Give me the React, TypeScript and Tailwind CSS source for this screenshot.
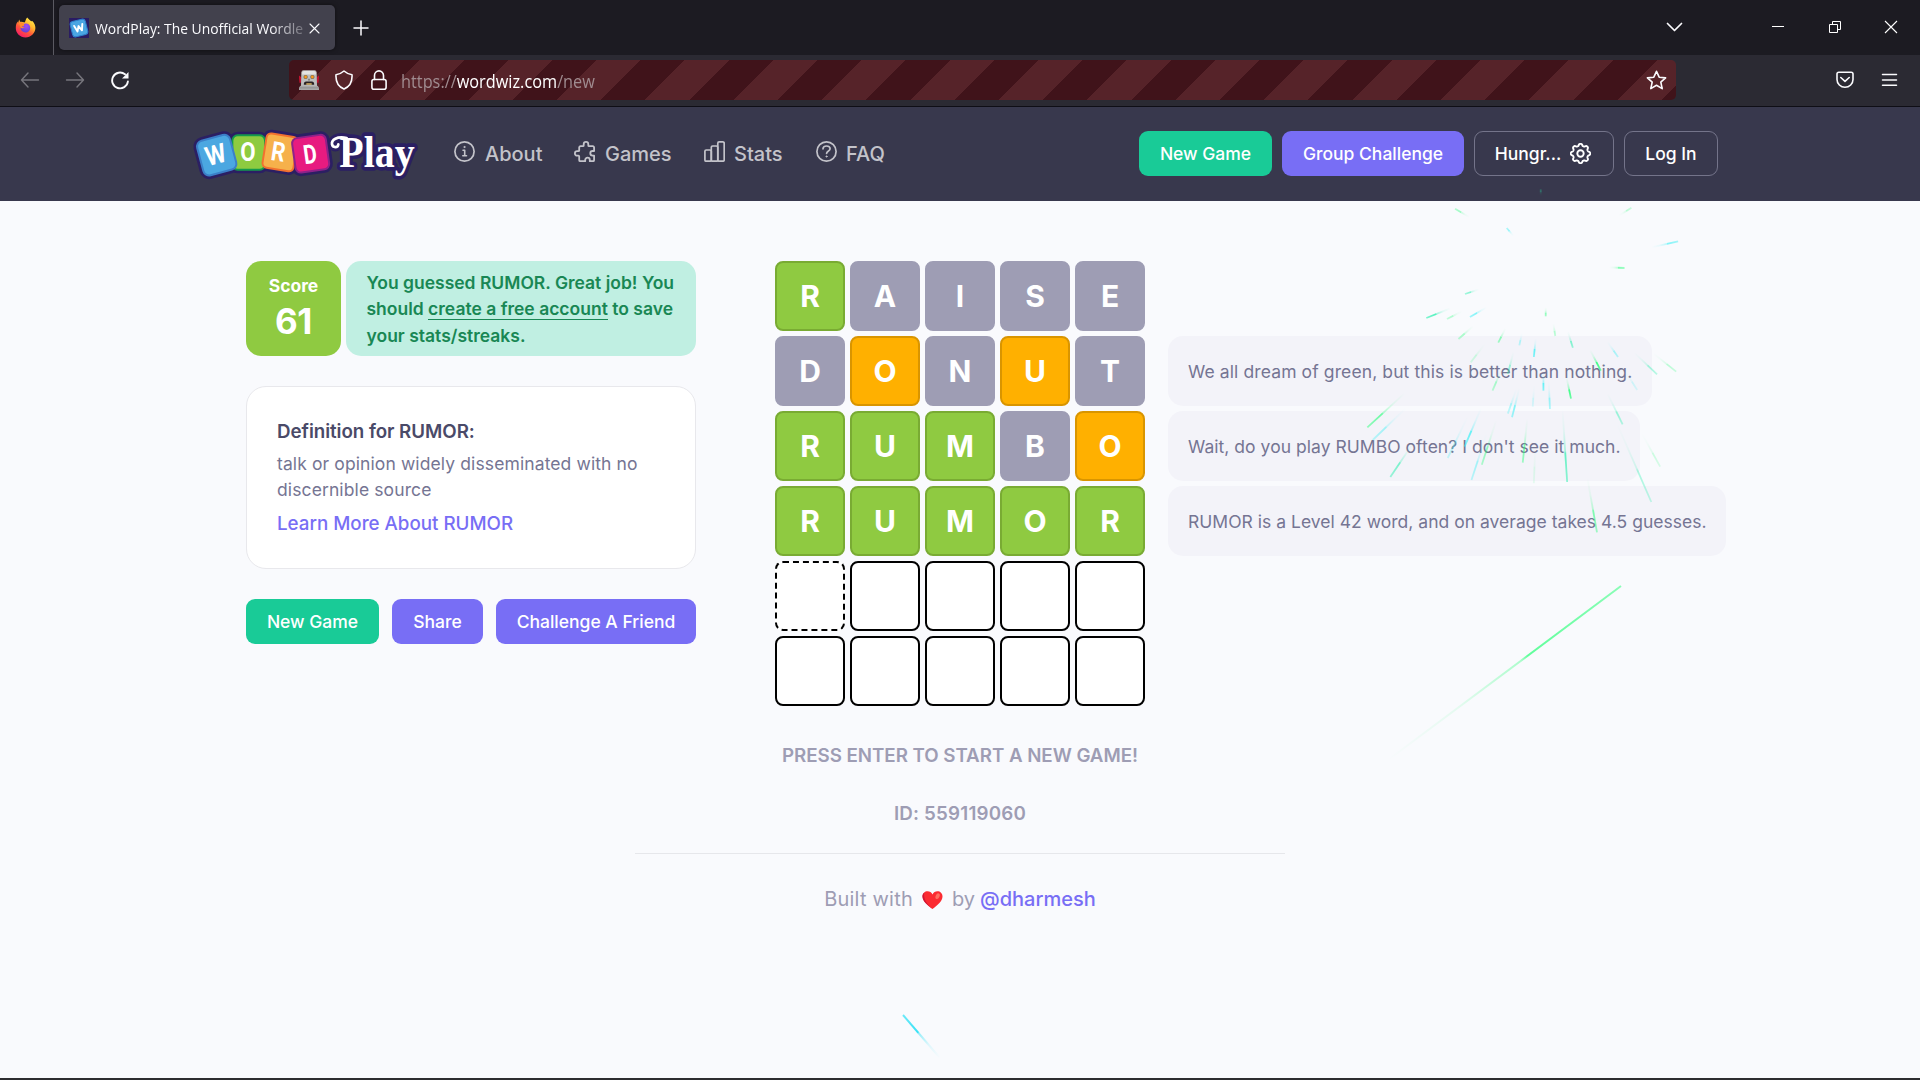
import React from 'react';

function FirefoxIcon() {
  return (
    <svg className="h-[21px] w-[21px]" viewBox="0 0 21 21">
      <defs>
        <linearGradient id="ffBody" x1="0.85" y1="0.05" x2="0.25" y2="1">
          <stop offset="0" stopColor="#fff14a" />
          <stop offset="0.35" stopColor="#ffb52e" />
          <stop offset="0.62" stopColor="#ff5a38" />
          <stop offset="1" stopColor="#f5156c" />
        </linearGradient>
        <radialGradient id="ffCore" cx="0.6" cy="0.3" r="0.8">
          <stop offset="0" stopColor="#a04cf5" />
          <stop offset="1" stopColor="#5a3fd0" />
        </radialGradient>
      </defs>
      <path
        d="M12.2 0.4c1.2 1.5 2.6 2.6 3.9 3.8l1.2-.2c2 2 3.2 4.4 3.1 7.1-.2 5.300-4.500 9.400-9.900 9.400S.8 16.300.8 11.100c0-3.100.7-5.200 2-6.500l.2 1.500 1.200-3.500.9 2.200c1.600-.2 3.200 0 4.500.8 1-1.500.9-3.500 2.600-5.200z"
        fill="url(#ffBody)"
      />
      <path
        d="M9.200 6.900c2.600-1.400 5.800.4 6 3.500.2 3-2.100 5-4.700 5-2.700 0-4.900-1.900-4.900-4.600 0-.8.2-1.500.6-2 .9.8 2.200.5 3-.1-.6-.3-.8-1.100 0-1.800z"
        fill="url(#ffCore)"
      />
      <path d="M4.300 6.200c1.600-.9 3.700-.6 4.900.7 0 .9-1.300 1.700-2.400 2 .4.9 1.400 1.500 2.900 1.100-1 1.400-2.700 1.600-4.200.800z" fill="#ff8a2e" />
    </svg>
  );
}

function Favicon() {
  return (
    <svg className="h-5 w-5 shrink-0" viewBox="0 0 20 20">
      <rect width="20" height="20" fill="#2a1c62" />
      <g transform="rotate(-14 10 10)">
        <rect x="2.200" y="2.200" width="15.600" height="15.600" rx="3" fill="#4aa5e2" stroke="#2f7fc9" strokeWidth="1" />
        <path d="M5.800 6.800l1.900 6.200L10 8l2.300 5 1.900-6.200" fill="none" stroke="#fff" strokeWidth="1.900" strokeLinejoin="round" strokeLinecap="round" />
      </g>
    </svg>
  );
}

function RobotIcon() {
  return (
    <svg className="h-5 w-5" viewBox="0 0 20 20">
      <path d="M0 5.500l2 1.500v5.500l-1.400.5C.2 11 0 8 0 5.500zM20 5.500l-2 1.500v5.500l1.400.5c.4-2 .6-5 .6-7.500z" fill="#c4122f" />
      <path d="M2.300 2.500Q2.500.3 4.500.2h11q2 .1 2.200 2.300l.3 13.500H2z" fill="#bdbdbd" />
      <path d="M3.200 2.500Q3.500 1 5 1h10q1.500 0 1.800 1.500l.1 2H3.100z" fill="#e3e3e3" />
      <circle cx="6.600" cy="7" r="2.100" fill="#75634c" />
      <circle cx="13.400" cy="7" r="2.100" fill="#75634c" />
      <circle cx="6.600" cy="7" r="1.400" fill="#f79a1f" />
      <circle cx="13.400" cy="7" r="1.400" fill="#f79a1f" />
      <path d="M9.300 8.800h1.400l.4 1.700H8.900z" fill="#7c7c7c" />
      <path d="M4.800 14.700q0-3.200 2.400-3.200h5.600q2.400 0 2.400 3.200z" fill="#2a2224" />
      <path d="M7.300 13.300h5.400v1.400H7.300z" fill="#e9c06a" />
      <path d="M1.500 15.700h17l1.500 1.800V20H0v-2.500z" fill="#a9a9a9" />
      <path d="M0 17.500h20v.8H0z" fill="#858585" />
    </svg>
  );
}

const line = { fill: 'none', stroke: 'currentColor', strokeLinecap: 'round', strokeLinejoin: 'round' } as const;

function InfoIcon() {
  return (
    <svg className="h-[21px] w-[21px]" viewBox="0 0 21 21" {...line} strokeWidth="1.700">
      <circle cx="10.500" cy="10.500" r="9.600" />
      <path d="M9 9.300h1.700v5.200M8.800 14.700h3.700" strokeWidth="1.600" />
      <circle cx="10.400" cy="6" r="0.600" fill="currentColor" strokeWidth="0.900" />
    </svg>
  );
}

function PuzzleIcon() {
  return (
    <svg className="h-[21px] w-[21px]" viewBox="0 0 21 21" {...line} strokeWidth="1.800">
      <path d="M6.500 5.200H9c.5 0 .7-.4.7-.8V3.200a2.300 2.300 0 0 1 4.600 0v1.200c0 .5.200.8.700.8h3.800a1.300 1.300 0 0 1 1.300 1.300V10h-1.500a2.300 2.300 0 0 0 0 4.600h1.500v4.300a1.300 1.300 0 0 1-1.300 1.300h-3v-1.300a2.300 2.300 0 0 0-4.600 0v1.300H6.500a1.300 1.300 0 0 1-1.300-1.300v-3.500c0-.5-.4-.7-.8-.7H3.200a2.300 2.300 0 0 1 0-4.600h1.200c.5 0 .8-.2.800-.7V6.500a1.300 1.300 0 0 1 1.300-1.300z" />
    </svg>
  );
}

function StatsIcon() {
  return (
    <svg className="h-[21px] w-[21px]" viewBox="0 0 21 21" {...line} strokeWidth="1.700">
      <rect x="0.900" y="9" width="6.400" height="11.200" rx="1.300" />
      <rect x="7.300" y="5" width="6.500" height="15.200" rx="1.300" />
      <rect x="13.800" y="0.900" width="6.400" height="19.300" rx="1.300" />
    </svg>
  );
}

function HelpIcon() {
  return (
    <svg className="h-[21px] w-[21px]" viewBox="0 0 21 21" {...line} strokeWidth="1.700">
      <circle cx="10.500" cy="10.500" r="9.600" />
      <path d="M7 7.800C7 5.800 8.600 5 10.500 5s3.600 1 3.600 2.800c0 2.300-3.300 2.100-3.500 4.600" />
      <circle cx="10.500" cy="15.500" r="0.600" fill="currentColor" strokeWidth="0.900" />
    </svg>
  );
}

const gearPath =
  Array.from({ length: 145 }, (_, i) => {
    const a = (i / 144) * Math.PI * 2;
    const r = 8.7 + 1.05 * Math.tanh(1.6 * Math.cos(8 * a));
    return `${i ? 'L' : 'M'}${(10.5 + r * Math.sin(a)).toFixed(2)} ${(10.5 - r * Math.cos(a)).toFixed(2)}`;
  }).join('') + 'Z';

function GearIcon() {
  return (
    <svg className="h-[21px] w-[21px]" viewBox="0 0 21 21" {...line} strokeWidth="1.900">
      <path d={gearPath} />
      <circle cx="10.500" cy="10.500" r="3.200" />
    </svg>
  );
}

function LogoTiles({ outline }: { outline?: boolean }) {
  const o = outline ? { stroke: '#2b1f63', fill: '#2b1f63', strokeWidth: 22 } : null;
  return (
    <g strokeLinejoin="round">
      <rect x="157" y="79" width="98" height="103" rx="16" fill="#8ecb40" stroke="#149a4c" strokeWidth="6" {...o} />
      <rect x="253" y="78" width="94" height="104" rx="14" transform="rotate(9 300 130)" fill="#f6b14b" stroke="#f1702f" strokeWidth="6" {...o} />
      <rect x="59" y="85" width="102" height="107" rx="18" transform="rotate(-15 110 138)" fill="#4ba7e1" stroke="#3b7fc8" strokeWidth="6" {...o} />
      <rect x="341" y="82" width="102" height="104" rx="16" transform="rotate(-8 392 134)" fill="#e71b80" stroke="#8d2289" strokeWidth="6" {...o} />
    </g>
  );
}

const swash = 'M500 87C470 81 454 93 456 106c2 11 18 11 19 0';

function Logo() {
  const letters: [string, number, number, number, number][] = [
    ['W', 107, 137, -15, 62],
    ['O', 204, 129, 0, 46],
    ['R', 295, 128, 9, 42],
    ['D', 390, 135, -8, 40],
  ];
  return (
    <svg className="h-[90px] w-[260px]" viewBox="0 0 780 270">
      <LogoTiles outline />
      <g stroke="#2b1f63" strokeLinejoin="round" strokeLinecap="round">
        <path d={swash} fill="none" strokeWidth="26" />
        <text x="478" y="173" fill="#fff" strokeWidth="22" style={{ paintOrder: 'stroke' }} fontFamily="'Liberation Serif', serif" fontWeight="700" fontSize="132" textLength="226" lengthAdjust="spacingAndGlyphs">
          Play
        </text>
      </g>
      <path d={swash} fill="none" stroke="#fff" strokeWidth="8" strokeLinecap="round" />
      <path d="M494 84v86" stroke="#fff" strokeWidth="8" />
      <LogoTiles />
      {letters.map(([ch, x, y, r, w]) => (
        <text
          key={ch}
          x={x - w / 2}
          y={y + 28}
          transform={`rotate(${r} ${x} ${y})`}
          fontFamily="Roboto, sans-serif"
          fontWeight="700"
          fontSize="80"
          fill="#fff"
          textLength={w}
          lengthAdjust="spacingAndGlyphs"
        >
          {ch}
        </text>
      ))}
    </svg>
  );
}

function HeartIcon() {
  return (
    <svg className="h-[18px] w-[21px]" viewBox="0 0 21 18">
      <path d="M10.500 18C6 14.500.5 10.500.5 5.500.5 2.300 2.900.3 5.500.3c2.200 0 4 1.200 5 3.100 1-1.900 2.800-3.100 5-3.100 2.600 0 5 2 5 5.200 0 5-5.500 9-10 12.500z" fill="#fb2b31" />
      <path d="M10.500 18C6 14.500.5 10.500.5 5.500c0-1.800.7-3.200 1.800-4.100C1.200 7 4 12 10.500 18z" fill="#cf1535" />
      <ellipse cx="15.600" cy="5.200" rx="1.900" ry="3" transform="rotate(25 15.600 5.200)" fill="#ff6f60" />
    </svg>
  );
}

function BrowserChrome() {
  return (
    <div className="text-[#fbfbfe]">
      <div className="flex h-[55px] bg-[#1c1b22]">
        <div className="flex w-[54px] items-center justify-center border-r border-[#5b5a62]">
          <div className="mr-[3px] flex">
            <FirefoxIcon />
          </div>
        </div>
        <div className="mt-[5px] ml-[5px] flex h-[45px] w-[276px] items-center rounded-[5px] bg-[#42414d] pl-[10px] shadow-[0_0_4px_rgba(0,0,0,0.5)]">
          <Favicon />
          <div className="ml-[6px] w-[213px] overflow-hidden [mask-image:linear-gradient(to_right,#000_82%,transparent_103%)]">
            <span className="inline-block origin-left scale-x-[0.925] text-[15px] leading-6 whitespace-nowrap" style={{ fontFamily: '"Open Sans", sans-serif' }}>
              WordPlay: The Unofficial Wordle
            </span>
          </div>
          <svg className="mt-px ml-[1px] h-[11px] w-[11px] shrink-0" viewBox="0 0 11 11" {...line} strokeWidth="1.100">
            <path d="M1 1l9 9M10 1l-9 9" />
          </svg>
        </div>
        <svg className="mt-5 ml-[18px] h-4 w-4" viewBox="0 0 16 16" {...line} strokeWidth="1.500">
          <path d="M8 1v14M1 8h14" />
        </svg>
        <svg className="mt-[22px] ml-auto h-[10px] w-[17px]" viewBox="0 0 17 10" {...line} strokeWidth="1.700">
          <path d="M1.500 1.500l7 7 7-7" />
        </svg>
        <svg className="mt-[20px] ml-[88px] h-[14px] w-[14px]" viewBox="0 0 14 14" fill="none" stroke="#fff">
          <path d="M1 6.500h12" />
        </svg>
        <svg className="mt-[20px] ml-[43px] h-[14px] w-[14px]" viewBox="0 0 14 14" fill="none" stroke="#fff">
          <path d="M1.500 4.500h8v8h-8zM4.500 4.500v-3h8v8h-3" />
        </svg>
        <svg className="mt-5 mr-[22px] ml-[42px] h-[14px] w-[14px]" viewBox="0 0 14 14" fill="none" stroke="#fff" strokeWidth="1.100">
          <path d="M1 1l12 12M13 1L1 13" />
        </svg>
      </div>

      <div className="flex h-[52px] items-start border-b border-[#0f0e16] bg-[#2b2a33]">
        <svg className="mt-[17px] ml-5 h-4 w-5 text-[#77767d]" viewBox="0 0 20 16" {...line} strokeWidth="1.400">
          <path d="M18.500 8h-17M8 1L1.500 8 8 15" />
        </svg>
        <svg className="mt-[17px] ml-[25px] h-4 w-5 text-[#77767d]" viewBox="0 0 20 16" {...line} strokeWidth="1.400">
          <path d="M1.500 8h17M12 1l6.500 7L12 15" />
        </svg>
        <svg className="mt-4 ml-[25px] h-[19px] w-5" viewBox="0 0 20 19" {...line} strokeWidth="1.900">
          <path d="M17.900 10.500A7.900 7.900 0 1 1 15 3.300" />
          <path d="M18.500 1v6.500H12z" fill="currentColor" stroke="none" />
        </svg>
        <div className="mt-[5px] ml-[159px] flex h-10 w-[1387px] items-center rounded-[5px] [background:repeating-linear-gradient(135deg,#40131a_0,#40131a_30px,#562329_30px,#562329_61.250px,#40131a_61.250px,#40131a_62.500px)]">
          <div className="ml-[10px]">
            <RobotIcon />
          </div>
          <svg className="ml-[15px] h-5 w-5" viewBox="0 0 20 20" {...line} strokeWidth="1.600">
            <path d="M10 1c2.500 2.200 5 3.300 8 3.800.4 6.200-1.600 11.700-8 14.300C3.600 16.500 1.600 11 2 4.800 5 4.300 7.500 3.200 10 1z" />
          </svg>
          <svg className="ml-[17px] h-5 w-4" viewBox="0 0 16 20" {...line} strokeWidth="1.600">
            <rect x="0.900" y="9.500" width="14.200" height="9.700" rx="2" />
            <path d="M3.500 9.500V5.400a4.500 4.500 0 0 1 9 0v4.100" />
          </svg>
          <div className="ml-[14px] w-[240px] pt-[2px]">
            <span className="inline-block origin-left scale-x-[0.932] text-[17.500px] leading-6 whitespace-nowrap text-[#a08c90]" style={{ fontFamily: '"Open Sans", sans-serif' }}>
              https://<span className="text-white">wordwiz.com</span>/new
            </span>
          </div>
          <svg className="mr-[9px] ml-auto h-[21px] w-[21px]" viewBox="0 0 21 21" {...line} strokeWidth="1.600">
            <path d="M10.500 1.300l2.700 5.900 6.400.7-4.800 4.300 1.400 6.400-5.700-3.300-5.700 3.300 1.400-6.400L1.400 7.900l6.400-.7z" />
          </svg>
        </div>
        <svg className="mt-[16px] ml-[160px] h-[18px] w-[18px]" viewBox="0 0 18 18" {...line} strokeWidth="1.600">
          <path d="M2.800 1.200h12.400a1.800 1.800 0 0 1 1.800 1.800v5.500a8 7.800 0 0 1-16 0V3a1.800 1.800 0 0 1 1.800-1.800z" />
          <path d="M4.800 6.500L9 10.300l4.200-3.800" />
        </svg>
        <svg className="mt-[18px] ml-[27px] h-[14px] w-[17px]" viewBox="0 0 17 14" {...line} strokeWidth="1.500">
          <path d="M1.500 1.500h14M1.500 7h14M1.500 12.200h14" />
        </svg>
      </div>
    </div>
  );
}

const button = 'flex h-[45px] shrink-0 items-center justify-center rounded-[9px] pt-px text-[17.5px] font-medium text-white whitespace-nowrap';

function SiteHeader() {
  return (
    <header className="flex h-[94px] items-center bg-[#38384d]">
      <div className="ml-[180px] shrink-0">
        <Logo />
      </div>
      <nav className="ml-[14px] flex text-[20px] font-medium text-[#c3c3ca]">
        <a className="flex w-[120px] items-center gap-[10px]">
          <span className="-mt-[5px]"><InfoIcon /></span>About
        </a>
        <a className="flex w-[130px] items-center gap-[10px]">
          <span className="-mt-[5px]"><PuzzleIcon /></span>Games
        </a>
        <a className="flex w-[112px] items-center gap-[9px]">
          <span className="-mt-[5px]"><StatsIcon /></span>Stats
        </a>
        <a className="flex items-center gap-[9px]">
          <span className="-mt-[5px]"><HelpIcon /></span>FAQ
        </a>
      </nav>
      <div className="mr-[202px] mb-px ml-auto flex gap-[10px]">
        <button className={`${button} w-[133px] bg-[#19cb97]`}>New Game</button>
        <button className={`${button} w-[182px] bg-[#786ef5]`}>Group Challenge</button>
        <button className={`${button} w-[140px] gap-[9px] border border-[#74748a] pr-[2px]`}>
          Hungr... <span className="-mt-px"><GearIcon /></span>
        </button>
        <button className={`${button} w-[94px] border border-[#74748a]`}>Log In</button>
      </div>
    </header>
  );
}

const rows: [string, string][] = [
  ['RAISE', 'gxxxx'],
  ['DONUT', 'xyxyx'],
  ['RUMBO', 'gggxy'],
  ['RUMOR', 'ggggg'],
  ['     ', 'deeee'],
  ['     ', 'eeeee'],
];

const tileStyle: Record<string, string> = {
  g: 'bg-[#8fca41] border-[#79ab33]',
  x: 'bg-[#9e9db4] border-[#9e9db4]',
  y: 'bg-[#ffb000] border-[#d99500]',
  d: 'bg-white border-black border-dashed',
  e: 'bg-white border-black',
};

function Board() {
  return (
    <div className="grid grid-cols-5 gap-[5px]">
      {rows.flatMap(([word, states], r) =>
        word.split('').map((ch, c) => (
          <div
            key={`${r}-${c}`}
            className={`flex h-[70px] w-[70px] items-center justify-center rounded-[8px] border-2 text-[30px] font-bold text-white ${tileStyle[states[c]]}`}
          >
            {ch.trim()}
          </div>
        )),
      )}
    </div>
  );
}

function Results() {
  return (
    <section className="w-[450px]">
      <div className="flex gap-[5px]">
        <div className="h-[95px] w-[95px] rounded-[15px] bg-[#8fca41] pt-[11px] text-center font-bold text-white">
          <div className="text-[17.5px] leading-[27px]">Score</div>
          <div className="text-[35px] leading-[44px] tracking-[-0.5px]">61</div>
        </div>
        <div className="flex h-[95px] w-[350px] items-center rounded-[15px] bg-[#c0efe2] pt-[2px] pl-[20.500px] text-[17.5px] leading-[26.250px] font-semibold whitespace-nowrap text-[#198754]">
          <p>
            You guessed RUMOR. Great job! You
            <br />
            should <span className="border-b border-[#198754]">create a free account</span> to save
            <br />
            your stats/streaks.
          </p>
        </div>
      </div>
      <div className="mt-[30px] h-[183px] rounded-[20px] border border-[#e8e8ec] bg-white pt-[31px] pl-[30px]">
        <h2 className="text-[18.750px] leading-7 font-semibold tracking-[-0.050px] text-[#4a4a68]">Definition for RUMOR:</h2>
        <p className="mt-[5px] text-[17.5px] leading-[26.250px] tracking-[0.110px] text-[#757593]">
          talk or opinion widely disseminated with no
          <br />
          discernible source
        </p>
        <a className="mt-[6px] block text-[18.750px] leading-7 font-[450] text-[#786ef5]">Learn More About RUMOR</a>
      </div>
      <div className="mt-[30px] flex gap-[13px]">
        <button className={`${button} w-[133px] bg-[#19cb97]`}>New Game</button>
        <button className={`${button} w-[91px] bg-[#786ef5]`}>Share</button>
        <button className={`${button} w-[200px] bg-[#786ef5]`}>Challenge A Friend</button>
      </div>
    </section>
  );
}

const bubble = 'flex h-[70px] items-center rounded-[15px] bg-[#f3f3f9] pt-[2px] pl-5 text-[17.5px] whitespace-nowrap text-[#757593]';

function Comments() {
  return (
    <section className="mt-[75px] flex flex-col items-start gap-[5px]">
      <div className={`${bubble} w-[484px] tracking-[0.110px]`}>We all dream of green, but this is better than nothing.</div>
      <div className={`${bubble} w-[472px] tracking-[0.040px]`}>Wait, do you play RUMBO often? I don't see it much.</div>
      <div className={`${bubble} w-[558px] tracking-[0.020px]`}>RUMOR is a Level 42 word, and on average takes 4.5 guesses.</div>
    </section>
  );
}

// Firework sparks: head x, head y, tail x, tail y, colour, opacity
const G = '#2bff7c';
const C = '#3df0f5';
const T = '#22f0ac';
const sparks: [number, number, number, number, string, number][] = [
  [797, 56, 835, 82, G, 0.5], [1258, 53, 1225, 77, G, 0.35], [932, 114, 950, 138, C, 0.6],
  [1380, 154, 1310, 172, C, 0.7], [1240, 234, 1200, 232, G, 0.65], [823, 312, 860, 298, T, 0.6],
  [722, 384, 785, 355, T, 0.85], [776, 387, 815, 364, G, 0.4], [836, 381, 880, 352, C, 0.7],
  [1034, 379, 1034, 352, G, 0.6], [1059, 438, 1054, 400, G, 0.4], [806, 447, 845, 408, G, 0.45],
  [910, 458, 929, 415, G, 0.6], [965, 466, 972, 430, C, 0.45], [1105, 473, 1092, 425, T, 0.65],
  [1003, 501, 1008, 445, C, 0.9], [1223, 501, 1195, 455, C, 0.5], [1325, 553, 1265, 488, T, 0.45],
  [1375, 545, 1315, 490, G, 0.35], [1178, 542, 1150, 480, G, 1], [838, 517, 875, 462, G, 0.25],
  [935, 552, 950, 485, T, 0.5], [895, 602, 920, 535, G, 0.45], [1028, 602, 1028, 545, C, 0.9],
  [1000, 650, 1004, 585, C, 0.25], [1045, 657, 1042, 575, C, 0.6], [1100, 626, 1088, 560, G, 1],
  [1273, 600, 1240, 540, C, 0.25], [1235, 703, 1195, 610, T, 0.5], [935, 671, 958, 595, C, 0.45],
  [946, 682, 965, 595, C, 0.7], [568, 712, 665, 610, G, 0.75], [582, 750, 668, 655, C, 0.5],
  [822, 770, 865, 655, C, 0.85], [778, 804, 830, 680, C, 0.4], [867, 824, 905, 690, G, 0.55],
  [974, 818, 986, 685, G, 0.65], [1090, 876, 1078, 660, T, 0.75], [628, 861, 690, 755, T, 0.65],
  [840, 870, 880, 730, C, 0.5], [1003, 880, 1007, 760, G, 0.15], [1310, 936, 1220, 700, T, 0.4],
  [1333, 830, 1285, 730, G, 0.25], [1168, 1027, 1143, 865, G, 0.65], [1021, -2, 1021, 18, T, 0.35],
];

function Fireworks() {
  const px = (x: number) => 1150 + x / 2.613;
  const py = (y: number) => 190 + y / 3;
  const segments = [
    ...sparks.map(([a, b, c, d, col, o]) => ({ x1: px(a), y1: py(b), x2: px(c), y2: py(d), col, o, w: 1.8 })),
    { x1: 1621, y1: 586, x2: 1388, y2: 760, col: '#3dff85', o: 0.9, w: 2 },
    { x1: 903, y1: 1015, x2: 940, y2: 1058, col: '#22dff5', o: 1, w: 2 },
  ];
  return (
    <svg className="pointer-events-none absolute inset-0 h-full w-full" viewBox="0 0 1920 1080">
      {segments.map((s, i) => (
        <g key={i}>
          <linearGradient id={`spark${i}`} gradientUnits="userSpaceOnUse" x1={s.x1} y1={s.y1} x2={s.x2} y2={s.y2}>
            <stop offset="0" stopColor={s.col} stopOpacity={s.o * 0.65} />
            <stop offset="0.4" stopColor={s.col} stopOpacity={s.o * 0.9} />
            <stop offset="0.43" stopColor={s.col} stopOpacity={s.o * 0.45} />
            <stop offset="0.7" stopColor={s.col} stopOpacity={s.o * 0.12} />
            <stop offset="1" stopColor={s.col} stopOpacity="0" />
          </linearGradient>
          <path d={`M${s.x1} ${s.y1}L${s.x2} ${s.y2}`} stroke={`url(#spark${i})`} strokeWidth={s.w} />
        </g>
      ))}
    </svg>
  );
}

export default function App() {
  return (
    <div className="relative flex h-[1080px] w-[1920px] flex-col overflow-hidden bg-[#f9fafd]" style={{ fontFamily: 'Inter, sans-serif' }}>
      <BrowserChrome />
      <SiteHeader />
      <main className="flex grow flex-col">
        <div className="flex items-start pt-[60px] pl-[246px]">
          <Results />
          <div className="ml-[79px]">
            <Board />
          </div>
          <div className="ml-[23px]">
            <Comments />
          </div>
        </div>
        <footer className="mx-auto flex w-[650px] flex-col items-center text-[#9e9db4]">
          <p className="mt-[36px] text-[18.750px] leading-7 font-semibold tracking-[-0.050px]">PRESS ENTER TO START A NEW GAME!</p>
          <p className="mt-[30px] text-[18.750px] leading-7 font-semibold tracking-[0.200px]">ID: 559119060</p>
          <div className="mt-[25px] h-px w-full bg-[#e6e7eb]" />
          <div className="mt-[30px] flex items-center text-[20px] leading-[30px]">
            <span className="tracking-[0.200px]">Built with</span>
            <span className="mt-px mr-[9px] ml-[9px]"><HeartIcon /></span>
            <span>by</span>
            <a className="ml-[5px] font-[450] text-[#786ef5]">@dharmesh</a>
          </div>
        </footer>
      </main>
      <div className="h-[2px] bg-[#2d2d30]" />
      <Fireworks />
    </div>
  );
}
